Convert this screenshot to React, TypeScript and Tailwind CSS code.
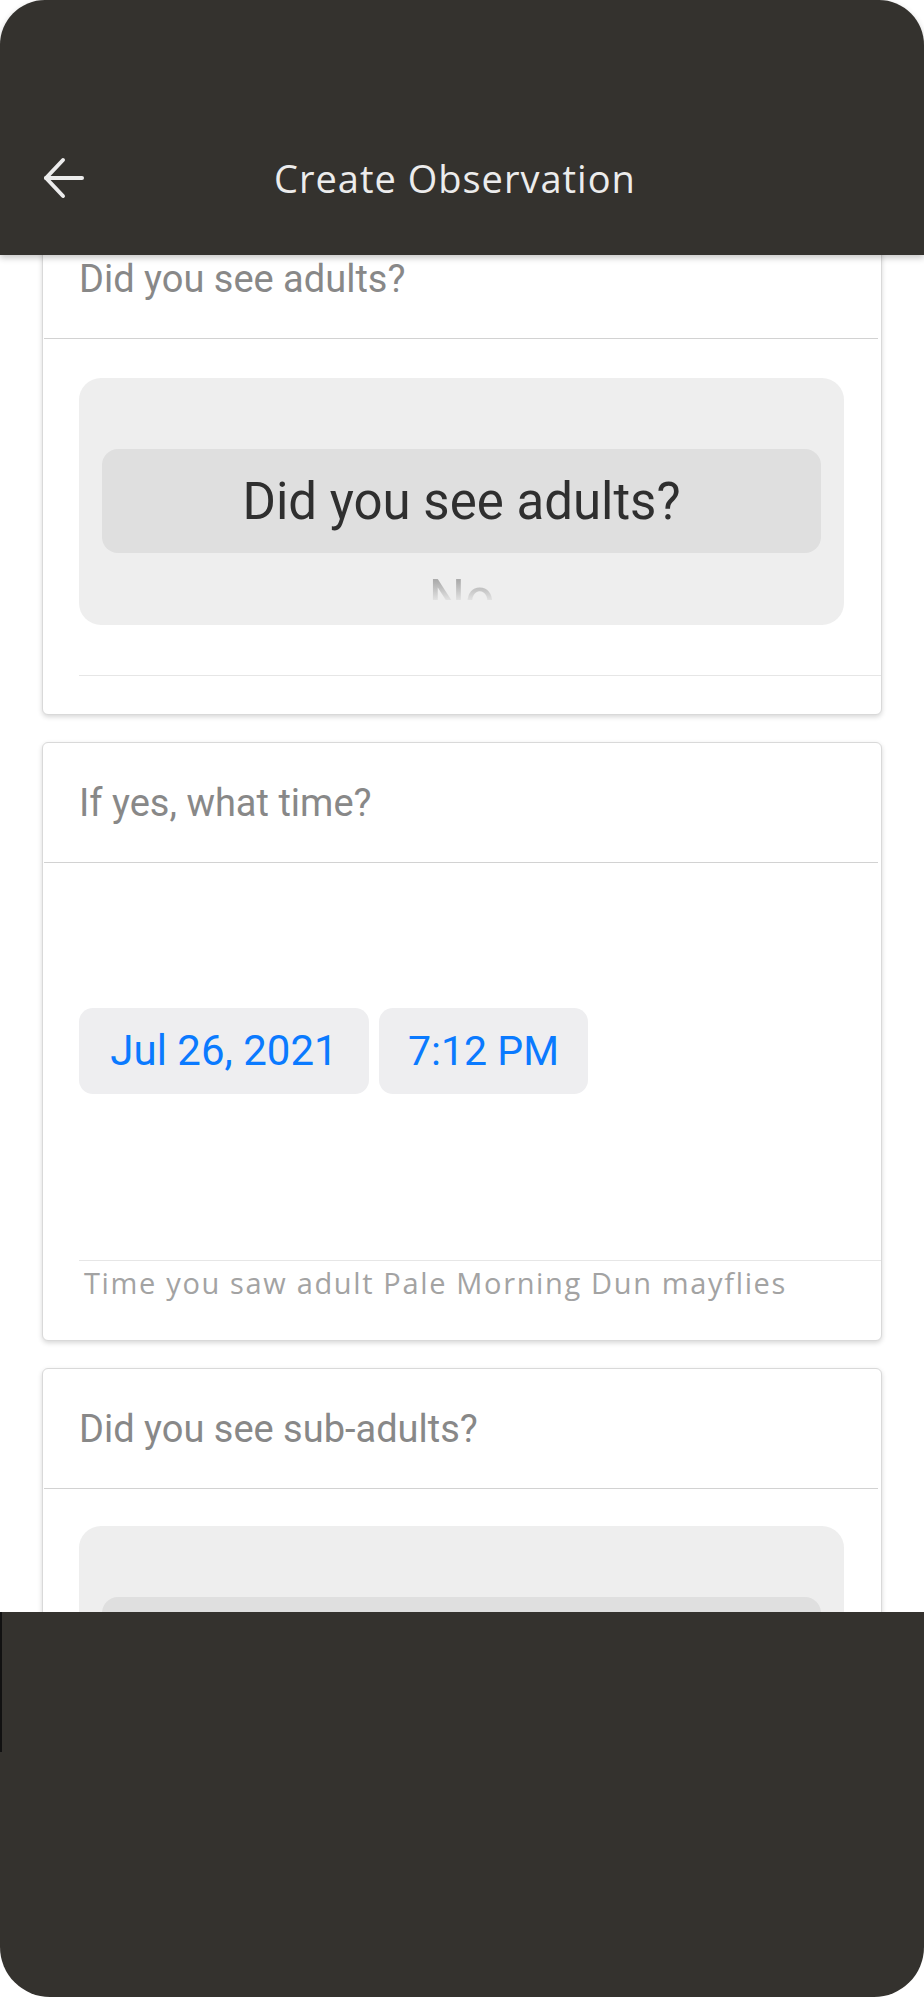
import React from "react";

const roboto = { fontFamily: "Roboto, 'Liberation Sans', sans-serif" } as const;

function Card({ children }: { children: React.ReactNode }) {
  return (
    <div className="bg-white border border-[#d9d9d9] rounded-[6px] shadow-[0_2px_5px_rgba(0,0,0,0.16)] flex flex-col shrink-0">
      {children}
    </div>
  );
}

function Label({ text }: { text: string }) {
  return (
    <>
      <div
        className="h-[119px] flex items-center pl-[36px] text-[38px] text-[#888888] leading-none"
        style={roboto}
      >
        {text}
      </div>
      <div className="h-px bg-[#d2d2d2] mx-[1px] mr-[3px]" />
    </>
  );
}

function Picker({ selected, next }: { selected: string; next: string }) {
  return (
    <div className="ml-[36px] mr-[37px] h-[247px] rounded-[22px] bg-[#eeeeee] flex flex-col pt-[71px] px-[23px] overflow-hidden shrink-0">
      <div
        className="h-[104px] shrink-0 rounded-[16px] bg-[#dfdfdf] flex items-center justify-center text-[51px] text-[#2f2f2f] leading-none"
        style={roboto}
      >
        {selected}
      </div>
      <div className="h-[47px] shrink-0 overflow-hidden flex justify-center items-start pt-[20px]">
        <span
          className="block h-[51px] text-[51px] leading-[51px] bg-linear-to-b from-[#acacac] from-15% to-[#ececec] to-60% bg-clip-text text-transparent"
          style={roboto}
        >
          {next}
        </span>
      </div>
    </div>
  );
}

export default function App() {
  return (
    <div className="w-[924px] h-[2000px] bg-white flex flex-col overflow-hidden">
      <header className="h-[255px] shrink-0 bg-[#34322e] rounded-t-[45px] relative z-10 shadow-[0_3px_6px_rgba(0,0,0,0.22)] flex items-center pt-[100px]">
        <svg
          width="42"
          height="42"
          viewBox="0 0 42 42"
          className="ml-[43px] shrink-0"
          fill="none"
          stroke="#ececec"
          strokeWidth="4"
          strokeLinecap="round"
          strokeLinejoin="round"
        >
          <path d="M39 21H3" />
          <path d="M20 3L3 21L20 39" />
        </svg>
        <div
          className="ml-[189px] text-[38px] text-[#ececec] tracking-[1px] leading-none"
          style={{ fontFamily: "'Open Sans', 'Noto Sans', sans-serif" }}
        >
          Create Observation
        </div>
      </header>

      <main className="h-[1357px] shrink-0 overflow-hidden">
        <div className="-mt-[37px] flex flex-col gap-[27px] px-[42px]">
          <Card>
            <Label text="Did you see adults?" />
            <div className="pt-[39px] flex flex-col">
              <Picker selected="Did you see adults?" next="No" />
              <div className="mt-[50px] h-px bg-[#e6e6e6] ml-[36px]" />
              <div className="h-[38px]" />
            </div>
          </Card>

          <Card>
            <Label text="If yes, what time?" />
            <div className="pt-[145px] pb-[166px] pl-[36px] flex gap-[10px]">
              <div
                className="h-[86px] w-[290px] rounded-[14px] bg-[#eeeef0] flex items-center justify-center text-[42px] text-[#0a7aff] leading-none"
                style={roboto}
              >
                Jul 26, 2021
              </div>
              <div
                className="h-[86px] w-[209px] rounded-[14px] bg-[#eeeef0] flex items-center justify-center text-[41px] text-[#0a7aff] leading-none"
                style={roboto}
              >
                7:12 PM
              </div>
            </div>
            <div className="h-px bg-[#e6e6e6] ml-[36px]" />
            <div className="h-[79px] pl-[41px] pt-[4px]">
              <div
                className="text-[29px] leading-[36px] text-[#a3a3a3] tracking-[1.65px] whitespace-nowrap"
                style={{ fontFamily: "'Open Sans', 'Noto Sans', sans-serif" }}
              >
                Time you saw adult Pale Morning Dun mayflies
              </div>
            </div>
          </Card>

          <Card>
            <Label text="Did you see sub-adults?" />
            <div className="pt-[37px] flex flex-col">
              <Picker selected="" next="" />
            </div>
          </Card>
        </div>
      </main>

      <footer className="h-[385px] shrink-0 bg-[#34322e] rounded-b-[50px] relative">
        <div className="absolute left-0 top-0 w-[2px] h-[140px] bg-[#111]" />
      </footer>
    </div>
  );
}
